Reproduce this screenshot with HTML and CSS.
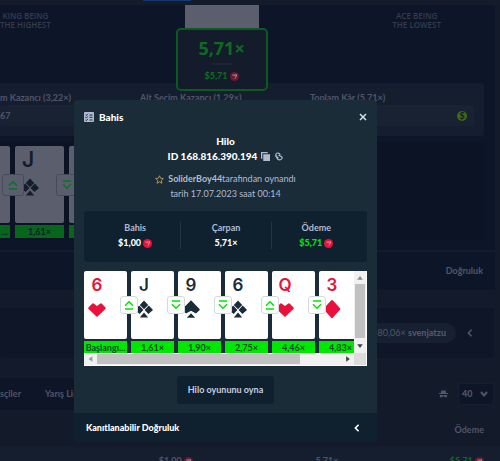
FILE: index.html
```html
<!DOCTYPE html>
<html lang="tr">

<head>
  <meta charset="UTF-8">
  <meta name="viewport" content="width=device-width, initial-scale=1.0">
  <title>Hilo - Bahis</title>
  <link rel="stylesheet" href="styles.css">
</head>

<body>
  <!-- shapes shared by the page and the modal -->
  <svg class="sprite" aria-hidden="true">
    <symbol id="heart" viewBox="0 0 18 18"><path d="M9 17L.5 9Q0 8.300.5 7.600L4.400 3.500Q5 3 5.600 3.500L9 6 12.400 3.500Q13 3 13.600 3.500L17.500 7.600Q18 8.300 17.500 9Z" /></symbol>
    <symbol id="diamond" viewBox="0 0 18 18"><path d="M9 0Q9.500 0 10 .6L17 8.300Q17.600 9 17 9.700L10 17.400Q9 18.400 8 17.400L1 9.700Q.4 9 1 8.300L8 .6Q8.500 0 9 0Z" /></symbol>
    <symbol id="club" viewBox="0 0 18 18"><path d="M9 .5L13.200 5 9 9.200 4.800 5ZM4.200 5.600L8.400 9.900 4.600 14 0 9.900ZM13.800 5.600L18 9.900 13.400 14 9.600 9.900ZM9 12.500L13.200 17.500H4.800Z" /></symbol>
    <symbol id="spade" viewBox="0 0 18 18"><path d="M9 .3L17.500 9Q18 9.700 17.500 10.300L14 13.600 9 10.800 4 13.600.5 10.300Q0 9.700.5 9ZM9 13.200L13.200 17.700H4.800Z" /></symbol>
    <symbol id="higher" viewBox="0 0 10 10"><path d="M1 5.700L5 1.700 9 5.700M1 9H9" /></symbol>
    <symbol id="lower" viewBox="0 0 10 10"><path d="M1 1H9M1 4.300L5 8.300 9 4.300" /></symbol>
    <symbol id="coin" viewBox="0 0 10 10"><circle cx="5" cy="5" r="5" /><path d="M2.300 3.300H5L4 4.500M4.600 3.200L7.400 2.800 6.800 5 5.200 7.800M5.300 4.700L7.600 4.300" fill="none" stroke="#fff" stroke-opacity=".5" stroke-width=".8" /></symbol>
  </svg>

  <div class="page">
    <div class="topbar"><span></span></div>

    <section class="game">
      <div class="table-top">
        <p class="hint">KING BEING<br>THE HIGHEST</p>
        <div class="current">
          <div class="blank-card"></div>
          <div class="win">
            <strong>5,71×</strong>
            <hr>
            <span>$5,71 <svg class="coin"><use href="#coin" /></svg></span>
          </div>
        </div>
        <p class="hint">ACE BEING<br>THE LOWEST</p>
      </div>

      <div class="profits">
        <div class="field">
          <label for="high">m Kazancı (3,22×)</label>
          <input id="high" type="text" value="67" readonly>
        </div>
        <div class="field">
          <label for="low">Alt Seçim Kazancı (1,29×)</label>
          <input id="low" type="text" readonly>
        </div>
        <div class="field">
          <label for="total">Toplam Kâr (5,71×)</label>
          <input id="total" type="text" readonly>
          <span class="dollar">$</span>
        </div>
      </div>

      <div class="history">
        <div class="turn">
          <div class="card"></div>
          <span class="odds">...</span>
          <span class="guess"><svg><use href="#higher" /></svg></span>
        </div>
        <div class="turn">
          <div class="card"><b>J</b><svg><use href="#club" /></svg></div>
          <span class="odds">1,61×</span>
          <span class="guess"><svg><use href="#lower" /></svg></span>
        </div>
        <div class="turn">
          <div class="card"></div>
          <span class="odds"></span>
        </div>
      </div>

      <footer class="game-footer"><a href="#">Doğruluk</a></footer>
    </section>

    <section class="winners">
      <div class="pill"><span>7.580,06×</span> <b>svenjatzu</b></div>
      <svg class="chevron" viewBox="0 0 8 10"><path d="M6 1L2 5 6 9" /></svg>
    </section>

    <section class="bets">
      <nav class="tabs">
        <a href="#">sçiler</a>
        <a href="#">Yarış Liderleri</a>
      </nav>
      <svg class="ghost" viewBox="0 0 10 10"><path d="M2.600 1H7.400L8 4H10V5H0V4H2ZM1 6H4.500V6.500H5.500V6H9V8.500H6L5.500 7.300H4.500L4 8.500H1Z" /></svg>
      <div class="select">
        <select aria-label="Satır sayısı">
          <option>40</option>
        </select>
        <svg viewBox="0 0 8 6"><path d="M1 1L4 4.500 7 1" /></svg>
      </div>
    </section>
    <table>
      <thead>
        <tr>
          <th></th>
          <th></th>
          <th>Ödeme</th>
        </tr>
      </thead>
      <tbody>
        <tr>
          <td>$1,00 <svg class="coin"><use href="#coin" /></svg></td>
          <td>5,71×</td>
          <td class="won">$5,71 <svg class="coin"><use href="#coin" /></svg></td>
        </tr>
      </tbody>
    </table>
  </div>

  <div class="overlay">
    <div class="modal" role="dialog" aria-labelledby="title">
      <header>
        <svg class="list-icon" viewBox="0 0 10 10"><rect width="10" height="10" rx="1" fill="#b1bad3" /><path d="M1.500 2.700L2.300 3.500 3.800 1.800M1.500 5.300L2.300 6.100 3.800 4.400M1.500 8L2.300 8.700 3.800 7M5.500 3H8.500M5.500 5.300H8.500M5.500 8H8.500" fill="none" stroke="#1a2c38" /></svg>
        <h1 id="title">Bahis</h1>
        <button type="button" class="close" aria-label="Kapat">
          <svg viewBox="0 0 8 8"><path d="M1 1L7 7M7 1L1 7" /></svg>
        </button>
      </header>

      <div class="content">
        <h2>Hilo</h2>
        <p class="bet-id">ID 168.816.390.194
          <button type="button" aria-label="Kopyala"><svg viewBox="0 0 10 10"><path d="M0 0H7.500V1.500H1.500V7.500H0ZM2.500 2.500H10V10H2.500Z" fill="#b1bad3" /></svg></button>
          <button type="button" aria-label="Bağlantı"><svg viewBox="0 0 10 10"><path d="M6.800 3.500A2.500 2.500 0 1 0 3.200 5.900L5 6.600M3.400 4A2.700 2.700 0 1 0 9 7Q9.200 4.800 7 4.500L5 3.800" fill="none" stroke="#b1bad3" stroke-width="1.300" /></svg></button>
        </p>
        <p class="player">
          <svg viewBox="0 0 10 10"><path d="M5 .8L6.300 3.600 9.300 3.900 7 6 7.700 9.200 5 7.600 2.300 9.200 3 6 .7 3.900 3.700 3.600Z" /></svg>
          <span><b>SoliderBoy44</b>tarafından oynandı</span>
        </p>
        <p class="date">tarih 17.07.2023 saat 00:14</p>

        <dl class="stats">
          <div>
            <dt>Bahis</dt>
            <dd>$1,00 <svg class="coin"><use href="#coin" /></svg></dd>
          </div>
          <div>
            <dt>Çarpan</dt>
            <dd>5,71×</dd>
          </div>
          <div>
            <dt>Ödeme</dt>
            <dd class="won">$5,71 <svg class="coin"><use href="#coin" /></svg></dd>
          </div>
        </dl>

        <div class="scroller">
          <div class="turns">
            <div class="turn red">
              <div class="card"><b>6</b><svg><use href="#heart" /></svg></div>
              <span class="odds">Başlangı...</span>
              <span class="guess"><svg><use href="#higher" /></svg></span>
            </div>
            <div class="turn">
              <div class="card"><b>J</b><svg><use href="#club" /></svg></div>
              <span class="odds">1,61×</span>
              <span class="guess"><svg><use href="#lower" /></svg></span>
            </div>
            <div class="turn">
              <div class="card"><b>9</b><svg><use href="#spade" /></svg></div>
              <span class="odds">1,90×</span>
              <span class="guess"><svg><use href="#lower" /></svg></span>
            </div>
            <div class="turn">
              <div class="card"><b>6</b><svg><use href="#club" /></svg></div>
              <span class="odds">2,75×</span>
              <span class="guess"><svg><use href="#higher" /></svg></span>
            </div>
            <div class="turn red">
              <div class="card"><b>Q</b><svg><use href="#heart" /></svg></div>
              <span class="odds">4,46×</span>
              <span class="guess"><svg><use href="#lower" /></svg></span>
            </div>
            <div class="turn red">
              <div class="card"><b>3</b><svg><use href="#diamond" /></svg></div>
              <span class="odds">4,83×</span>
              <span class="guess"><svg><use href="#lower" /></svg></span>
            </div>
          </div>
          <div class="bar vertical">
            <svg viewBox="0 0 13 13"><path d="M3.500 9L6.500 5 9.500 9Z" fill="#8a8a8a" /></svg>
            <i></i>
            <svg viewBox="0 0 13 13"><path d="M3.500 4L6.500 8 9.500 4Z" fill="#404040" /></svg>
          </div>
          <div class="bar horizontal">
            <svg viewBox="0 0 13 13"><path d="M8.500 3.500L4.500 6.500 8.500 9.500Z" fill="#9a9a9a" /></svg>
            <i></i>
            <svg viewBox="0 0 13 13"><path d="M5 3.500L9 6.500 5 9.500Z" fill="#404040" /></svg>
          </div>
          <div class="corner"></div>
        </div>

        <button type="button" class="play">Hilo oyununu oyna</button>
      </div>

      <button type="button" class="fairness">
        Kanıtlanabilir Doğruluk
        <svg class="chevron" viewBox="0 0 8 10"><path d="M6 1L2 5 6 9" /></svg>
      </button>
    </div>
  </div>
</body>

</html>
```
FILE: styles.css
```css
* {
  margin: 0;
  padding: 0;
  box-sizing: border-box;
}

body {
  position: relative;
  height: 100vh;
  overflow: hidden;

  background-color: #131a29;
  color: #50566a;
  font-family: Lato, sans-serif;
  font-size: 9px;
  line-height: 12px;
}

button,
input,
select {
  border: none;
  outline: none;
  background: none;
  color: inherit;
  font: inherit;
}

button {
  cursor: pointer;
}

a {
  color: inherit;
  text-decoration: none;
}

svg {
  display: block;
  flex: none;
}

.sprite {
  position: absolute;
  width: 0;
  height: 0;
}

.coin {
  display: inline-block;
  width: 9px;
  height: 9px;
  fill: #e9113c;
  vertical-align: -2px;
}

.page .coin {
  fill: #6c1830;
}

.chevron {
  width: 8px;
  height: 8px;
  fill: none;
  stroke: currentColor;
  stroke-width: 2;
}

/* page */
.topbar {
  height: 5px;
  padding-left: 143px;
  background-color: #141c2b;
}

.topbar span {
  display: block;
  width: 48px;
  height: 1px;
  background-color: #123a70;
}

.game {
  margin-right: 5px;
  background-color: #0d1628;
}

.table-top {
  display: flex;
  justify-content: space-between;
  height: 78px;
  margin-right: 54px;
}

.hint {
  padding-top: 6px;
  color: #343b4e;
  font-family: "Open Sans", sans-serif;
  font-size: 8px;
  font-weight: 600;
  line-height: 9px;
  text-align: center;
  white-space: nowrap;
}

.current {
  display: flex;
  flex-direction: column;
  align-items: center;
}

.blank-card {
  flex: none;
  width: 74px;
  height: 23px;
  background-color: #5b5e6d;
}

.win {
  position: relative;
  display: flex;
  flex: none;
  flex-direction: column;
  align-items: center;

  width: 92px;
  height: 63px;
  padding-top: 8px;
  border: 2px solid #0b5a20;
  border-radius: 5px;
  background-color: #141c2c;
  color: #0d6a20;
  font-weight: 900;
}

.win strong {
  font-family: "Open Sans", sans-serif;
  font-size: 18px;
  font-weight: 700;
  line-height: 20px;
}

.win hr {
  width: 22px;
  margin: 5px 0;
  border: none;
  border-top: 2px solid #1b2435;
}

.profits {
  display: grid;
  grid-template-columns: 134px 1fr 1fr;
  gap: 6px;
  height: 53px;
  margin-right: 11px;
  padding: 9px 10px 0 0;
  border-radius: 0 3px 3px 0;
  background-color: #151e2f;
  font-weight: 700;
}

.field {
  display: flex;
  position: relative;
  flex-direction: column;
  gap: 1px;
}

.field input {
  width: 100%;
  height: 21px;
  border-radius: 2px;
  background-color: #182233;
}

.dollar {
  position: absolute;
  right: 7px;
  bottom: 15px;
  width: 10px;
  height: 10px;
  border-radius: 50%;
  background-color: #3e6b12;
  color: #121c2c;
  font-weight: 700;
  line-height: 10px;
  text-align: center;
}

.history {
  display: flex;
  gap: 5px;
  height: 98px;
  margin: 6px 11px 0 0;
  padding-top: 4px;
  background-color: #0c1324;
}

.history .turn {
  width: 49px;
}

.history .turn:first-child {
  margin-left: -39px;
}

.history .card {
  height: 77px;
  background-color: #5b5e6d;
  color: #141d2c;
}

.history .card b {
  font-size: 21px;
}

.history .card svg {
  margin: 8px 0 0 2px;
}

.history .odds {
  background-color: #08661c;
  color: #101c28;
}

.history .turn:first-child .odds {
  padding-right: 2px;
  text-align: right;
}

.history .guess {
  top: 28px;
  right: -14px;
  width: 22px;
  height: 22px;
  border-color: #484b5a;
  background-color: #5b5e6d;
}

.history .guess svg {
  stroke: #0a7420;
}

.game-footer {
  display: flex;
  align-items: center;
  justify-content: flex-end;
  height: 40px;
  margin-top: 10px;
  padding-right: 12px;
  border-top: 2px solid #141d2e;
  font-weight: 700;
}

.winners {
  display: flex;
  align-items: center;
  justify-content: flex-end;
  gap: 10px;
  height: 50px;
  margin: 18px 6px 20px 0;
  padding-right: 20px;
  border-radius: 4px;
  background-color: #0e1627;
}

.pill {
  padding: 4px 10px;
  border-radius: 10px;
  background-color: #162031;
}

.pill b {
  font-weight: 900;
}

.bets {
  display: flex;
  align-items: center;
  gap: 10px;
  margin-right: 6px;
}

.tabs {
  display: flex;
  gap: 24px;
  width: 220px;
  margin-right: auto;
  padding: 10px 0;
  background-color: #0d1527;
  font-weight: 700;
}

.ghost {
  width: 9px;
  height: 10px;
  fill: #50566a;
}

.select {
  display: flex;
  align-items: center;
  gap: 5px;
  height: 22px;
  padding: 0 5px 0 3px;
  border: 1px solid #171f2f;
  border-radius: 2px;
  background-color: #0d1527;
  font-weight: 900;
}

.select select {
  width: 13px;
  -webkit-appearance: none;
  appearance: none;
}

.select svg {
  width: 8px;
  height: 6px;
  fill: none;
  stroke: #50566a;
  stroke-width: 2;
}

table {
  width: 100%;
  border-collapse: collapse;
  table-layout: fixed;
}

th,
td {
  padding: 14px 16px 11px 0;
  font-weight: 700;
  text-align: right;
}

th:first-child {
  width: 209px;
}

tbody {
  background-color: #151e2f;
}

td {
  padding-top: 8px;
}

td.won {
  color: #0d6a20;
}

/* cards */
.turn {
  position: relative;
  flex: none;
  width: 43px;
  color: #1a2c38;
}

.turn.red {
  color: #e9113c;
}

.card {
  height: 68px;
  padding: 4px 0 0 4px;
  border-radius: 2px;
  background-color: #fff;
}

.card b {
  display: block;
  width: 18px;
  font-family: Inter, sans-serif;
  font-size: 17px;
  font-weight: 600;
  line-height: 20px;
  text-align: center;
}

.card svg {
  width: 18px;
  height: 18px;
  margin-top: 5px;
  fill: currentColor;
}

.odds {
  display: block;
  height: 13px;
  margin-top: 2px;
  overflow: hidden;
  background-color: #00e701;
  color: #0b4a2c;
  font-weight: 700;
  line-height: 13px;
  text-align: center;
  white-space: nowrap;
}

.guess {
  position: absolute;
  z-index: 1;
  top: 25px;
  right: -11px;
  display: flex;
  align-items: center;
  justify-content: center;

  width: 18px;
  height: 18px;
  border: 1px solid #d4d9dd;
  border-radius: 3px;
  background-color: #fff;
}

.guess svg {
  width: 10px;
  height: 10px;
  fill: none;
  stroke: #00e701;
  stroke-width: 1.5;
}

/* modal */
.overlay {
  position: absolute;
  z-index: 2;
  inset: 0;
  display: flex;
  align-items: flex-start;
  justify-content: center;
  padding: 100px 49px 0 0;
}

.modal {
  width: 303px;
  border-radius: 4px;
  overflow: hidden;
  background-color: #1a2c38;
  color: #b1bad3;
}

.modal header {
  display: flex;
  align-items: center;
  gap: 5px;
  padding: 11px 10px;
}

.list-icon {
  width: 10px;
  height: 10px;
}

h1,
h2,
.bet-id {
  color: #fff;
  font-size: 10px;
  font-weight: 900;
  line-height: 12px;
}

.close {
  margin-left: auto;
}

.close svg {
  width: 8px;
  height: 8px;
  fill: none;
  stroke: #d5dceb;
  stroke-width: 1.5;
}

.content {
  display: flex;
  flex-direction: column;
  align-items: center;
  padding: 1px 10px 9px;
}

.bet-id,
.player {
  display: flex;
  align-items: center;
  gap: 4px;
}

.bet-id {
  margin-top: 3px;
}

.bet-id svg {
  width: 9px;
  height: 9px;
}

.player {
  margin-top: 11px;
}

.player svg {
  width: 9px;
  height: 9px;
  fill: none;
  stroke: #c69a55;
}

.player b {
  font-weight: 700;
}

.date {
  margin-top: 3px;
}

.stats {
  display: grid;
  grid-template-columns: repeat(3, 1fr);
  width: 100%;
  margin: 11px 0 9px;
  padding: 11px 6px 13px;
  border-radius: 3px;
  background-color: #0f212e;
  text-align: center;
}

.stats div + div {
  border-left: 1px solid #213743;
}

.stats dt {
  font-weight: 700;
}

.stats dd {
  margin-top: 3px;
  color: #fff;
  font-weight: 900;
}

.stats .won {
  color: #00e701;
}

.scroller {
  display: grid;
  grid-template-columns: 1fr 12px;
  grid-template-rows: 82px 12px;
  width: 100%;
  border-right: 1px solid #fff;
  border-bottom: 1px solid #fff;
}

.turns {
  display: flex;
  gap: 4px;
  min-width: 0;
  overflow: hidden;
}

.bar {
  display: flex;
  background-color: #f1f1f1;
}

.bar svg {
  width: 13px;
  height: 12px;
}

.bar i {
  background-color: #c1c1c1;
}

.vertical {
  flex-direction: column;
}

.vertical svg {
  width: 12px;
  height: 13px;
}

.vertical i {
  width: 10px;
  height: 54px;
  margin: 0 1px;
}

.horizontal i {
  flex: 0 0 75%;
  height: 10px;
  margin: 1px 0;
}

.horizontal svg:last-child,
.vertical svg:last-child {
  margin: auto 0 0 auto;
}

.corner {
  background-color: #dcdcdc;
}

.play {
  margin-top: 10px;
  padding: 8px 11px;
  border-radius: 3px;
  background-color: #0f212e;
  color: #c5cde0;
  font-weight: 700;
}

.fairness {
  display: flex;
  align-items: center;
  justify-content: space-between;
  width: 100%;
  padding: 9px 16px 8px 12px;
  background-color: #0f212e;
  color: #fff;
  font-weight: 900;
}
```
